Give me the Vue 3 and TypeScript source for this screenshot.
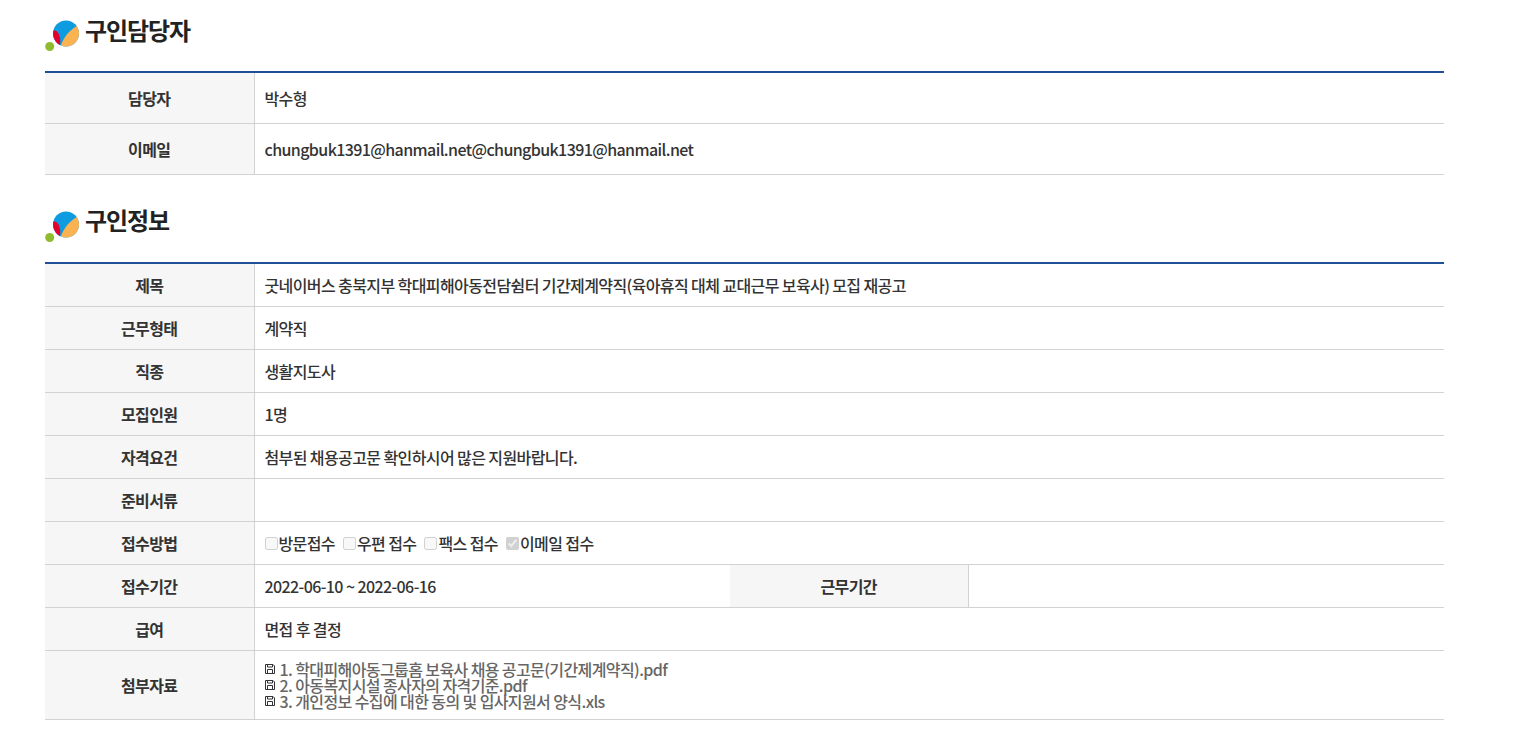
<script setup lang="ts">
interface Row { label: string; value: string }
const contact: Row[] = [
  { label: '담당자', value: '박수형' },
  { label: '이메일', value: 'chungbuk1391@hanmail.net@chungbuk1391@hanmail.net' },
]
const top: Row[] = [
  { label: '제목', value: '굿네이버스 충북지부 학대피해아동전담쉼터 기간제계약직(육아휴직 대체 교대근무 보육사) 모집 재공고' },
  { label: '근무형태', value: '계약직' },
  { label: '직종', value: '생활지도사' },
  { label: '모집인원', value: '1명' },
  { label: '자격요건', value: '첨부된 채용공고문 확인하시어 많은 지원바랍니다.' },
  { label: '준비서류', value: '' },
]
const methods = [
  { label: '방문접수', on: false },
  { label: '우편 접수', on: false },
  { label: '팩스 접수', on: false },
  { label: '이메일 접수', on: true },
]
const files = [
  '1. 학대피해아동그룹홈 보육사 채용 공고문(기간제계약직).pdf',
  '2. 아동복지시설 종사자의 자격기준.pdf',
  '3. 개인정보 수집에 대한 동의 및 입사지원서 양식.xls',
]
</script>

<template>
  <main class="page">
    <h2 class="title first">
      <svg class="logo" viewBox="0 0 36 32" width="36" height="32" aria-hidden="true">
        <clipPath id="disc-a"><circle cx="21" cy="13.5" r="13" /></clipPath>
        <circle cx="21" cy="13.500" r="13" fill="#0f9be0" />
        <g clip-path="url(#disc-a)">
          <path d="M15.500 26.500 C19 16 25 10 32 6 L36 6 L36 30 L15.500 30Z" fill="#fbb351" />
          <path d="M7 12 C9 9.500 12 10.500 13.500 13.500 C15.500 17 15.800 22 14.500 26 C11 24 7 19 7 12Z" fill="#e4002b" />
        </g>
        <circle cx="4.700" cy="26.500" r="4.500" fill="#90bb2e" />
      </svg>
      <span>구인담당자</span>
    </h2>
    <table class="grid contact">
      <colgroup><col class="c1" /><col /></colgroup>
      <tbody>
        <tr v-for="r in contact" :key="r.label">
          <th>{{ r.label }}</th>
          <td>{{ r.value }}</td>
        </tr>
      </tbody>
    </table>

    <h2 class="title second">
      <svg class="logo" viewBox="0 0 36 32" width="36" height="32" aria-hidden="true">
        <clipPath id="disc-b"><circle cx="21" cy="13.5" r="13" /></clipPath>
        <circle cx="21" cy="13.500" r="13" fill="#0f9be0" />
        <g clip-path="url(#disc-b)">
          <path d="M15.500 26.500 C19 16 25 10 32 6 L36 6 L36 30 L15.500 30Z" fill="#fbb351" />
          <path d="M7 12 C9 9.500 12 10.500 13.500 13.500 C15.500 17 15.800 22 14.500 26 C11 24 7 19 7 12Z" fill="#e4002b" />
        </g>
        <circle cx="4.700" cy="26.500" r="4.500" fill="#90bb2e" />
      </svg>
      <span>구인정보</span>
    </h2>
    <table class="grid info">
      <colgroup><col class="c1" /><col class="c2" /><col class="c3" /><col /></colgroup>
      <tbody>
        <tr v-for="r in top" :key="r.label">
          <th>{{ r.label }}</th>
          <td colspan="3">{{ r.value }}</td>
        </tr>
        <tr>
          <th>접수방법</th>
          <td colspan="3">
            <div class="methods">
              <label v-for="m in methods" :key="m.label" class="method">
                <input type="checkbox" :checked="m.on" disabled />{{ m.label }}
              </label>
            </div>
          </td>
        </tr>
        <tr>
          <th>접수기간</th>
          <td>2022-06-10 ~ 2022-06-16</td>
          <th>근무기간</th>
          <td></td>
        </tr>
        <tr>
          <th>급여</th>
          <td colspan="3">면접 후 결정</td>
        </tr>
        <tr class="attach">
          <th>첨부자료</th>
          <td colspan="3">
            <ul class="files">
              <li v-for="f in files" :key="f">
                <svg viewBox="0 0 10 10" width="10" height="10" aria-hidden="true">
                  <path d="M.5.5h7.500l1.500 1.500v7.500h-9z" fill="#fff" stroke="#333" />
                  <path d="M2.500 .5v2.500h5v-2.500M2.500 9.500v-4h5v4" fill="none" stroke="#333" />
                </svg>
                <a>{{ f }}</a>
              </li>
            </ul>
          </td>
        </tr>
      </tbody>
    </table>
  </main>
</template>

<style>
html, body { margin: 0; background: #fff; }
</style>

<style scoped>
.page {
  width: 1399px;
  margin-left: 45px;
  padding-bottom: 11px;
  font-family: "Noto Sans CJK KR", "Noto Sans", sans-serif;
  color: #333;
}
.title {
  display: flex;
  align-items: flex-start;
  gap: 4px;
  margin: 0;
  font-size: 24px;
  font-weight: 700;
  line-height: 30px;
  letter-spacing: -1.100px;
  color: #222;
  height: 56px;
}
.title.first { padding-top: 15px; }
.title.second { padding-top: 31px; }
.title.second span { margin-top: -1px; }
.logo { flex: none; margin-top: 5px; }
.grid {
  width: 100%;
  table-layout: fixed;
  border-collapse: collapse;
  border-top: 2px solid #1f5095;
  font-size: 16px;
  letter-spacing: -0.600px;
}
.c1 { width: 209px; }
.c2 { width: 476px; }
.c3 { width: 238px; }
th, td {
  border-bottom: 1px solid #d2d2d2;
  padding: 0 10px;
  font-weight: 500;
  color: #333;
}
th {
  background: #f6f6f6;
  text-align: center;
  border-right: 1px solid #d2d2d2;
  font-weight: 700;
}
td { text-align: left; }
.contact tr { height: 51px; }
.info tr { height: 43px; }
.info tr:first-child { height: 44px; }
.info tr.attach { height: 69px; }
.methods { display: flex; gap: 8px; }
.method { display: inline-flex; align-items: center; }
.method input {
  width: 13px;
  height: 13px;
  margin: 0 1px 0 0;
}
.files { list-style: none; margin: 0; padding: 0; }
.files li {
  display: flex;
  align-items: center;
  gap: 5px;
  height: 16px;
  line-height: 16px;
  color: #666;
}
.files a { color: #666; }
</style>
